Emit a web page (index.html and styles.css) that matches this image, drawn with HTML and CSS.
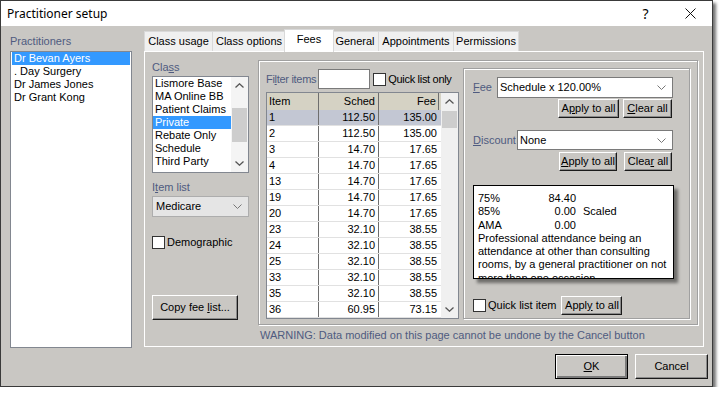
FILE: index.html
```html
<!doctype html>
<html lang="en">
<head>
	<meta charset="UTF-8">
	<title>Practitioner setup</title>
	<link rel="stylesheet" href="styles.css">
</head>
<body>
<div class="window">
	<div class="titlebar">
		<span class="title">Practitioner setup</span>
		<span class="cap help">?</span>
		<span class="cap close"><svg width="11" height="11" viewBox="0 0 11 11"><path d="M0.5 0.5L10.5 10.5M10.5 0.5L0.5 10.5" stroke="#111" stroke-width="1"/></svg></span>
	</div>
	<div class="main">
		<div class="prac">
			<div class="lbl">Practitioners</div>
			<ul class="listbox prac-list">
				<li class="sel">Dr Bevan Ayers</li>
				<li>. Day Surgery</li>
				<li>Dr James Jones</li>
				<li>Dr Grant Kong</li>
			</ul>
		</div>
		<div class="tabs">
			<ul class="tabstrip">
				<li class="t1">Class usage</li>
				<li class="t2">Class options</li>
				<li class="t3 on">Fees</li>
				<li class="t4">General</li>
				<li class="t5">Appointments</li>
				<li class="t6">Permissions</li>
			</ul>
			<div class="page">
				<!-- class column -->
				<div class="classcol">
					<div class="lbl">Cla<u>s</u>s</div>
					<div class="listbox class-list">
						<ul>
							<li>Lismore Base</li>
							<li>MA Online BB</li>
							<li>Patient Claims</li>
							<li class="sel">Private</li>
							<li>Rebate Only</li>
							<li>Schedule</li>
							<li>Third Party</li>
						</ul>
						<div class="vscroll">
							<span class="arr"><svg width="9" height="5" viewBox="0 0 9 5"><path d="M0.5 4.5L4.5 0.8L8.5 4.5" fill="none" stroke="#555" stroke-width="1.3"/></svg></span>
							<span class="track"><span class="thumb class-thumb"></span></span>
							<span class="arr"><svg width="9" height="5" viewBox="0 0 9 5"><path d="M0.5 0.5L4.5 4.2L8.5 0.5" fill="none" stroke="#555" stroke-width="1.3"/></svg></span>
						</div>
					</div>
					<div class="lbl item-lbl">I<u>t</u>em list</div>
					<div class="combo gray">
						<span>Medicare</span>
						<svg width="9" height="5" viewBox="0 0 9 5"><path d="M0.5 0.5L4.5 4.5L8.5 0.5" fill="none" stroke="#777" stroke-width="1"/></svg>
					</div>
					<label class="check demo"><span class="box"></span>Demographic</label>
					<button class="btn copy">Copy fee <u>l</u>ist...</button>
				</div>
				<!-- fees column -->
				<div class="feecol">
					<div class="group">
						<div class="items">
							<div class="filter">
								<span class="lbl">Fi<u>l</u>ter items</span>
								<span class="edit"></span>
								<label class="check"><span class="box"></span>Quick list only</label>
							</div>
							<div class="grid">
								<div class="rows">
									<div class="row head"><span>Item</span><span>Sched</span><span>Fee</span></div>
									<div class="row sel"><span>1</span><span>112.50</span><span>135.00</span></div>
									<div class="row"><span>2</span><span>112.50</span><span>135.00</span></div>
									<div class="row"><span>3</span><span>14.70</span><span>17.65</span></div>
									<div class="row"><span>4</span><span>14.70</span><span>17.65</span></div>
									<div class="row"><span>13</span><span>14.70</span><span>17.65</span></div>
									<div class="row"><span>19</span><span>14.70</span><span>17.65</span></div>
									<div class="row"><span>20</span><span>14.70</span><span>17.65</span></div>
									<div class="row"><span>23</span><span>32.10</span><span>38.55</span></div>
									<div class="row"><span>24</span><span>32.10</span><span>38.55</span></div>
									<div class="row"><span>25</span><span>32.10</span><span>38.55</span></div>
									<div class="row"><span>33</span><span>32.10</span><span>38.55</span></div>
									<div class="row"><span>35</span><span>32.10</span><span>38.55</span></div>
									<div class="row"><span>36</span><span>60.95</span><span>73.15</span></div>
								</div>
								<div class="vscroll">
									<span class="arr"><svg width="9" height="5" viewBox="0 0 9 5"><path d="M0.5 4.5L4.5 0.8L8.5 4.5" fill="none" stroke="#555" stroke-width="1.3"/></svg></span>
									<span class="track"><span class="thumb grid-thumb"></span></span>
									<span class="arr"><svg width="9" height="5" viewBox="0 0 9 5"><path d="M0.5 0.5L4.5 4.2L8.5 0.5" fill="none" stroke="#555" stroke-width="1.3"/></svg></span>
								</div>
							</div>
						</div>
						<div class="subgroup">
							<div class="field">
								<span class="lbl fee-lbl"><u>F</u>ee</span>
								<div class="combo fee-combo">
									<span>Schedule x 120.00%</span>
									<svg width="9" height="5" viewBox="0 0 9 5"><path d="M0.5 0.5L4.5 4.5L8.5 0.5" fill="none" stroke="#777" stroke-width="1"/></svg>
								</div>
							</div>
							<div class="btnrow">
								<button class="btn small apply">A<u>p</u>ply to all</button>
								<button class="btn small clear"><u>C</u>lear all</button>
							</div>
							<div class="field disc">
								<span class="lbl disc-lbl"><u>D</u>iscount</span>
								<div class="combo disc-combo">
									<span>None</span>
									<svg width="9" height="5" viewBox="0 0 9 5"><path d="M0.5 0.5L4.5 4.5L8.5 0.5" fill="none" stroke="#777" stroke-width="1"/></svg>
								</div>
							</div>
							<div class="btnrow wide">
								<button class="btn small apply2"><u>A</u>pply to all</button>
								<button class="btn small clear2">Clea<u>r</u> all</button>
							</div>
							<div class="info">
								<div class="rates">
									<span>75%</span><span class="num">84.40</span><span></span>
									<span>85%</span><span class="num">0.00</span><span class="tag">Scaled</span>
									<span>AMA</span><span class="num">0.00</span><span></span>
								</div>
								<p>Professional attendance being an attendance at other than consulting rooms, by a general practitioner on not more than one occasion</p>
							</div>
							<div class="quick">
								<label class="check"><span class="box"></span>Quick list item</label>
								<button class="btn small apply3">Appl<u>y</u> to all</button>
							</div>
						</div>
					</div>
					<p class="warn">WARNING: Data modified on this page cannot be undone by the Cancel button</p>
				</div>
			</div>
		</div>
	</div>
	<div class="footer">
		<button class="btn ok"><u>O</u>K</button>
		<button class="btn cancel">Cancel</button>
	</div>
</div>
</body>
</html>
```

FILE: styles.css
```css
*{
	margin: 0;
	padding: 0;
	box-sizing: border-box;
}
ul,li{
	list-style: none;
}
body{
	background: #fff;
	font: 11px/13px "Liberation Sans", Arial, sans-serif;
	color: #000;
}
u{
	text-decoration: underline;
}
.window{
	width: 713px;
	height: 387px;
	border: 1px solid #3a3a3a;
	background: #c9c7c3;
	box-shadow: 3px 3px 3px rgba(0,0,0,0.55);
	display: flex;
	flex-direction: column;
}
/* title bar */
.titlebar{
	height: 25px;
	background: #fff;
	display: flex;
	align-items: center;
	font: 12px "Noto Sans", "Liberation Sans", sans-serif;
}
.title{
	flex: 1;
	padding-left: 6px;
}
.cap{
	height: 25px;
	display: flex;
	align-items: center;
	justify-content: center;
}
.help{
	width: 45px;
	font-size: 14px;
}
.close{
	width: 44px;
}
/* main area */
.main{
	display: flex;
	padding-left: 9px;
	height: 322px;
}
.lbl{
	color: #4f5b80;
	white-space: nowrap;
}
.prac{
	padding-top: 9px;
	width: 122px;
}
.prac .lbl{
	margin-bottom: 3px;
}
.listbox{
	background: #fff;
	border: 1px solid #828790;
}
.prac-list{
	height: 297px;
}
.prac-list li{
	height: 13px;
	padding-left: 2px;
	margin: 0 1px;
}
.listbox .sel{
	background: #3399ff;
	color: #fff;
}
/* tabs */
.tabs{
	margin-left: 12px;
	margin-top: 3px;
	width: 560px;
	display: flex;
	flex-direction: column;
}
.tabstrip{
	height: 22px;
	display: flex;
	align-items: flex-end;
	padding-left: 1px;
}
.tabstrip li{
	height: 20px;
	line-height: 18px;
	background: #f0f0f0;
	border: 1px solid #d9d9d9;
	border-bottom: none;
	text-align: center;
	margin-left: -1px;
}
.tabstrip li.on{
	height: 23px;
	line-height: 19px;
	background: #fff;
	margin: 0 -2px -1px -2px;
	position: relative;
	z-index: 1;
}
.t1{ width: 69px; }
.t2{ width: 74px; }
.t3{ width: 50px; }
.t4{ width: 48px; }
.t5{ width: 76px; }
.t6{ width: 66px; }
.page{
	height: 296px;
	border: 1px solid #fff;
	display: flex;
}
/* class column */
.classcol{
	width: 97px;
	margin-left: 7px;
	padding-top: 9px;
	display: flex;
	flex-direction: column;
}
.classcol .lbl{
	margin-bottom: 2px;
}
.class-list{
	height: 97px;
	display: flex;
}
.class-list ul{
	flex: 1;
}
.class-list li{
	height: 13px;
	padding-left: 2px;
}
.vscroll{
	width: 17px;
	background: #f0f0f0;
	display: flex;
	flex-direction: column;
}
.class-list .vscroll{
	background: #f4f4f4;
}
.arr{
	height: 17px;
	display: flex;
	align-items: center;
	justify-content: center;
}
.track{
	flex: 1;
	padding: 0 1px;
}
.thumb{
	display: block;
	background: #cdcdcd;
}
.class-thumb{
	height: 34px;
	margin-top: 14px;
}
.grid-thumb{
	height: 17px;
	margin-top: 1px;
}
.item-lbl{
	margin-top: 8px;
}
.combo{
	height: 21px;
	background: #fff;
	border: 1px solid #7a7a7a;
	display: flex;
	align-items: center;
	justify-content: space-between;
	padding: 0 6px 0 2px;
}
.combo.gray{
	background: #e5e5e5;
	border-color: #adadad;
	padding-left: 3px;
}
.check{
	display: flex;
	align-items: center;
	white-space: nowrap;
}
.box{
	width: 13px;
	height: 13px;
	background: #fff;
	border: 1px solid #333;
	margin-right: 2px;
}
.demo{
	margin-top: 19px;
}
.btn{
	font: inherit;
	color: #000;
	background: #c9c7c3;
	border: 1px solid;
	border-color: #fff #1a1a1a #1a1a1a #fff;
	box-shadow: inset -1px -1px 0 #8a8a8a;
	white-space: nowrap;
}
.copy{
	width: 86px;
	height: 25px;
	margin-top: 46px;
}
/* fees column */
.feecol{
	width: 440px;
	margin-left: 9px;
	padding-top: 8px;
}
.group{
	height: 265px;
	border: 1px solid #a0a0a0;
	box-shadow: inset 1px 1px 0 #fff, 1px 1px 0 #fff;
	display: flex;
}
.items{
	width: 193px;
	margin-left: 7px;
	padding-top: 8px;
}
.filter{
	display: flex;
	align-items: center;
	height: 20px;
	letter-spacing: -0.3px;
}
.edit{
	width: 52px;
	height: 20px;
	background: #fff;
	border: 1px solid #7a7a7a;
	margin: 0 3px 0 2px;
}
.grid{
	height: 227px;
	margin-top: 3px;
	border: 1px solid #828790;
	background: #fff;
	display: flex;
	overflow: hidden;
}
.rows{
	width: 174px;
}
.row{
	display: grid;
	grid-template-columns: 52px 60px 62px;
	height: 16px;
	border-bottom: 1px solid #e1e1e1;
	line-height: 15px;
}
.row span{
	padding-left: 2px;
}
.row span + span{
	text-align: right;
	padding-right: 3px;
}
.row span:last-child{
	padding-right: 4px;
}
.row span:nth-child(1),
.row span:nth-child(2){
	border-right: 1px solid #6e6e6e;
}
.row.head{
	height: 17px;
	background: #d5d2c4;
	border-bottom: none;
	line-height: 17px;
}
.row.head span:last-child{
	border-right: 1px solid #6e6e6e;
	margin-right: 2px;
	padding-right: 2px;
}
.row.sel{
	background: #c3c7d3;
}
/* fee / discount box */
.subgroup{
	width: 227px;
	height: 251px;
	margin: 7px 0 0 4px;
	border: 1px solid #a0a0a0;
	box-shadow: inset 1px 1px 0 #fff, 1px 1px 0 #fff;
	padding: 8px 15px 0 9px;
	display: flex;
	flex-direction: column;
}
.field{
	display: flex;
	align-items: center;
}
.fee-lbl{
	width: 24px;
}
.fee-combo{
	width: 176px;
}
.disc{
	margin-top: 12px;
}
.disc-lbl{
	width: 44px;
}
.disc-combo{
	width: 156px;
	height: 20px;
}
.btnrow{
	display: flex;
	justify-content: flex-end;
	gap: 4px;
	padding-right: 2px;
	margin-top: 1px;
}
.btnrow.wide{
	gap: 7px;
	margin-top: 2px;
}
.small{
	height: 19px;
}
.apply{ width: 61px; }
.clear{ width: 49px; }
.apply2{ width: 58px; }
.clear2{ width: 48px; }
.apply3{ width: 61px; }
.info{
	height: 94px;
	margin-top: 14px;
	background: #fff;
	border: 1px solid #000;
	box-shadow: 4px 4px 3px rgba(0,0,0,0.45);
	padding: 6px 4px 0 4px;
	line-height: 13.3px;
	overflow: hidden;
}
.rates{
	display: grid;
	grid-template-columns: 56px 42px auto;
}
.rates .num{
	text-align: right;
}
.rates .tag{
	padding-left: 7px;
}
.quick{
	display: flex;
	align-items: center;
	margin-top: 17px;
}
.quick .btn{
	margin-left: 5px;
}
.warn{
	color: #4f5b80;
	margin: 4px 0 0 2px;
	white-space: nowrap;
}
/* footer */
.footer{
	display: flex;
	justify-content: flex-end;
	gap: 7px;
	padding-right: 4px;
	margin-top: 6px;
}
.footer .btn{
	width: 73px;
	height: 25px;
}
.ok{
	border-color: #000;
	box-shadow: inset 1px 1px 0 #fff, inset -2px -2px 0 #7a7a7a;
}
.cancel{
	width: 74px;
}
```
